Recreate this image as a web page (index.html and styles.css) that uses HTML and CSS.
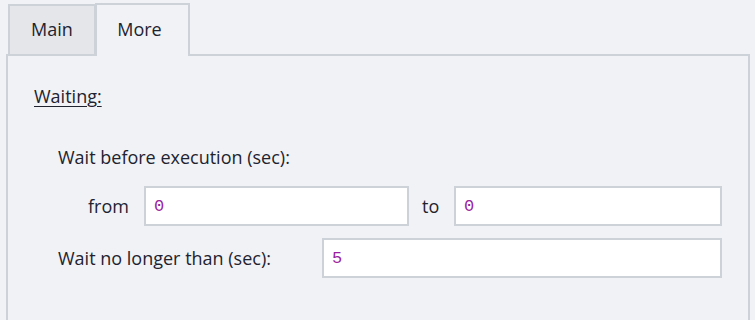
FILE: index.html
```html
<!DOCTYPE html>
<html>
<head>
<meta charset="utf-8">
<link rel="stylesheet" href="styles.css">
</head>
<body>
<div class="tabs">
  <div class="tab tab-main">Main</div>
  <div class="tab tab-more">More</div>
</div>
<div class="panel">
  <div class="group-title">Waiting:</div>
  <div class="label-row">Wait before execution (sec):</div>
  <div class="range-row">
    <span class="lbl-from">from</span>
    <div class="input input-from">0</div>
    <span class="lbl-to">to</span>
    <div class="input input-to">0</div>
  </div>
  <div class="limit-row">
    <span class="lbl-limit">Wait no longer than (sec):</span>
    <div class="input input-limit">5</div>
  </div>
</div>
</body>
</html>
```
FILE: styles.css
```css
html, body {
  margin: 0;
  padding: 0;
  background: #f0f2f5;
  width: 755px;
  height: 320px;
  overflow: hidden;
  font-family: "Open Sans", "Noto Sans", sans-serif;
  font-size: 18px;
  color: #1f2330;
}
.tabs {
  display: flex;
  align-items: flex-end;
  height: 54px;
  padding-left: 8px;
}
.tab {
  box-sizing: border-box;
  border: 2px solid #cdd2d9;
  border-bottom: none;
  display: flex;
  justify-content: center;
  padding-top: 12px;
  line-height: 22px;
}
.tab-main {
  width: 88px;
  height: 50px;
  background: #e4e6ea;
}
.tab-more {
  width: 95px;
  height: 53px;
  margin-left: -1px;
  margin-bottom: -2px;
  background: #f0f2f5;
  position: relative;
  z-index: 1;
  padding-top: 13px;
  padding-right: 6px;
}
.panel {
  box-sizing: border-box;
  margin-left: 6px;
  width: 744px;
  height: 280px;
  border: 2px solid #cdd2d9;
  padding: 29px 0 0 26px;
}
.group-title {
  line-height: 22px;
  text-decoration: underline;
  text-underline-offset: 3px;
}
.label-row {
  margin-top: 39px;
  margin-left: 24px;
  line-height: 22px;
}
.range-row {
  display: flex;
  align-items: center;
  margin-top: 18px;
  margin-left: 54px;
}
.lbl-from {
  width: 56px;
}
.lbl-to {
  width: 45px;
  padding-left: 13px;
  box-sizing: border-box;
}
.input {
  box-sizing: border-box;
  height: 40px;
  background: #ffffff;
  border: 2px solid #cdd2d9;
  font-family: "Liberation Mono", monospace;
  font-size: 17px;
  color: #9b1fa0;
  padding: 9px 0 0 8px;
  line-height: 20px;
}
.input-from { width: 265px; }
.input-to { width: 268px; }
.limit-row {
  display: flex;
  align-items: center;
  margin-top: 12px;
  margin-left: 24px;
}
.lbl-limit {
  width: 264px;
}
.input-limit { width: 400px; }
```
